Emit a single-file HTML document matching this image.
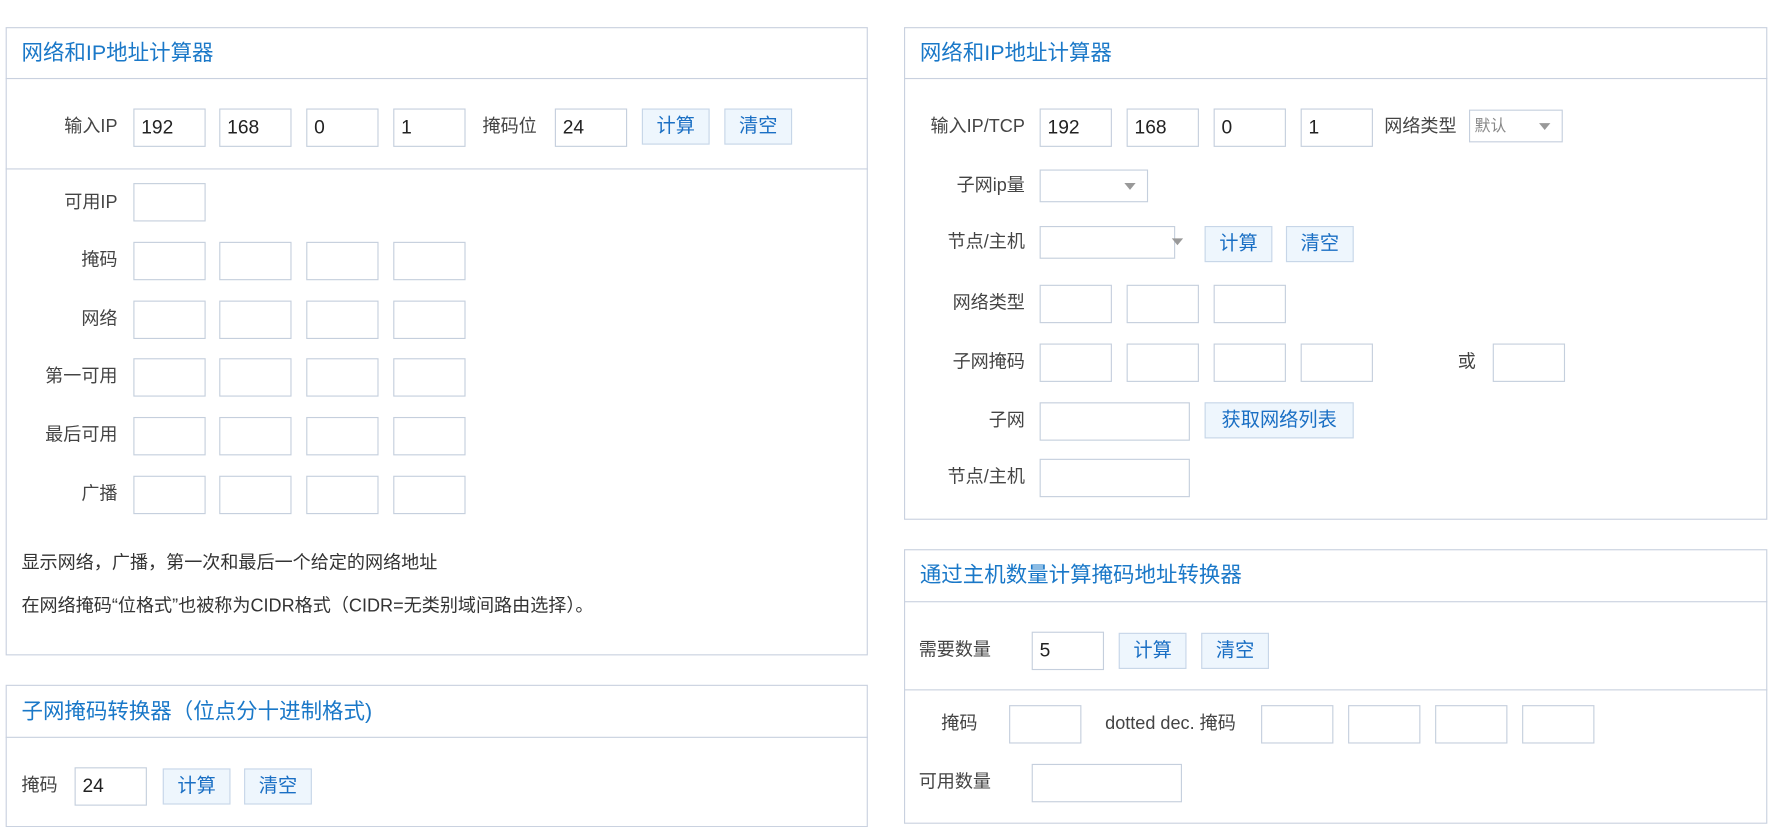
<!DOCTYPE html>
<html><head><meta charset="utf-8"><style>
html,body{margin:0;padding:0;background:#fff;width:1774px;height:827px;overflow:hidden}
#w{position:absolute;left:0;top:0;width:1570px;height:732px;transform:scale(1.13);transform-origin:0 0;font-family:"Liberation Sans","Noto Sans CJK SC",sans-serif;font-size:16px;color:#444}
.p{position:absolute;border:1px solid #c9d1df;box-sizing:border-box}
.hl{position:absolute;height:1px;background:#c9d1df}
.t{position:absolute;color:#1a78c8;font-size:19px;white-space:nowrap}
.i{position:absolute;border:1px solid #c5cfdd;box-sizing:border-box;height:34px;width:64px;font-size:17px;color:#222;padding-left:6px;line-height:32px;background:#fff}
.b{position:absolute;border:1px solid #c7d6e8;background:#eef6fd;color:#1a6fc4;box-sizing:border-box;height:32px;width:60px;text-align:center;line-height:30px;font-size:17px}
.l{position:absolute;white-space:nowrap;line-height:20px}
.r{text-align:right}
.s{position:absolute;border:1px solid #c5cfdd;box-sizing:border-box;height:29px;background:#fff;color:#888;font-size:14px;line-height:27px;padding-left:4px}
.s:after{content:"";position:absolute;right:10px;top:11px;border:5px solid transparent;border-top:6px solid #999;border-bottom:0}
.s.n:after{display:none}
</style></head><body><div id="w">
<div class="p" style="left:5px;top:24px;width:763px;height:556px"></div>
<div class="hl" style="left:5px;top:69px;width:763px"></div>
<div class="hl" style="left:5px;top:149px;width:763px"></div>
<div class="t" style="left:19px;top:32px">网络和IP地址计算器</div>
<div class="l r" style="right:1466px;top:103px">输入IP</div>
<div class="i" style="left:118px;top:96px">192</div><div class="i" style="left:194px;top:96px">168</div><div class="i" style="left:271px;top:96px">0</div><div class="i" style="left:348px;top:96px">1</div>
<div class="l" style="left:427px;top:103px">掩码位</div>
<div class="i" style="left:491px;top:96px">24</div>
<div class="b" style="left:568px;top:96px">计算</div><div class="b" style="left:641px;top:96px">清空</div>
<div class="l r" style="right:1466px;top:170px">可用IP</div><div class="i" style="left:118px;top:162px"></div>
<div class="l r" style="right:1466px;top:221px">掩码</div>
<div class="l r" style="right:1466px;top:273px">网络</div>
<div class="l r" style="right:1466px;top:324px">第一可用</div>
<div class="l r" style="right:1466px;top:376px">最后可用</div>
<div class="l r" style="right:1466px;top:428px">广播</div>
<div class="i" style="left:118px;top:214px"></div><div class="i" style="left:194px;top:214px"></div><div class="i" style="left:271px;top:214px"></div><div class="i" style="left:348px;top:214px"></div>
<div class="i" style="left:118px;top:266px"></div><div class="i" style="left:194px;top:266px"></div><div class="i" style="left:271px;top:266px"></div><div class="i" style="left:348px;top:266px"></div>
<div class="i" style="left:118px;top:317px"></div><div class="i" style="left:194px;top:317px"></div><div class="i" style="left:271px;top:317px"></div><div class="i" style="left:348px;top:317px"></div>
<div class="i" style="left:118px;top:369px"></div><div class="i" style="left:194px;top:369px"></div><div class="i" style="left:271px;top:369px"></div><div class="i" style="left:348px;top:369px"></div>
<div class="i" style="left:118px;top:421px"></div><div class="i" style="left:194px;top:421px"></div><div class="i" style="left:271px;top:421px"></div><div class="i" style="left:348px;top:421px"></div>
<div class="l" style="left:19px;top:489px;color:#333">显示网络，广播，第一次和最后一个给定的网络地址</div>
<div class="l" style="left:19px;top:527px;color:#333">在网络掩码“位格式”也被称为CIDR格式（CIDR=无类别域间路由选择）。</div>

<div class="p" style="left:5px;top:606px;width:763px;height:126px"></div>
<div class="hl" style="left:5px;top:652px;width:763px"></div>
<div class="t" style="left:19px;top:615px">子网掩码转换器（位点分十进制格式)</div>
<div class="l" style="left:19px;top:686px">掩码</div>
<div class="i" style="left:66px;top:679px">24</div>
<div class="b" style="left:144px;top:680px">计算</div><div class="b" style="left:216px;top:680px">清空</div>

<div class="p" style="left:800px;top:24px;width:764px;height:436px"></div>
<div class="hl" style="left:800px;top:69px;width:764px"></div>
<div class="t" style="left:814px;top:32px">网络和IP地址计算器</div>
<div class="l r" style="right:663px;top:103px">输入IP/TCP</div>
<div class="i" style="left:920px;top:96px">192</div><div class="i" style="left:997px;top:96px">168</div><div class="i" style="left:1074px;top:96px">0</div><div class="i" style="left:1151px;top:96px">1</div>
<div class="l" style="left:1225px;top:103px">网络类型</div>
<div class="s" style="left:1300px;top:97px;width:83px">默认</div>
<div class="l r" style="right:663px;top:155px">子网ip量</div>
<div class="s" style="left:920px;top:150px;width:96px"></div>
<div class="l r" style="right:663px;top:205px">节点/主机</div>
<div class="s n" style="left:920px;top:200px;width:120px"></div>
<div style="position:absolute;left:1037px;top:211px;border:5px solid transparent;border-top:6px solid #999;border-bottom:0"></div>
<div class="b" style="left:1066px;top:200px">计算</div><div class="b" style="left:1138px;top:200px">清空</div>
<div class="l r" style="right:663px;top:259px">网络类型</div>
<div class="i" style="left:920px;top:252px"></div><div class="i" style="left:997px;top:252px"></div><div class="i" style="left:1074px;top:252px"></div>
<div class="l r" style="right:663px;top:311px">子网掩码</div>
<div class="i" style="left:920px;top:304px"></div><div class="i" style="left:997px;top:304px"></div><div class="i" style="left:1074px;top:304px"></div><div class="i" style="left:1151px;top:304px"></div>
<div class="l" style="left:1290px;top:311px">或</div>
<div class="i" style="left:1321px;top:304px"></div>
<div class="l r" style="right:663px;top:363px">子网</div>
<div class="i" style="left:920px;top:356px;width:133px"></div>
<div class="b" style="left:1066px;top:356px;width:132px">获取网络列表</div>
<div class="l r" style="right:663px;top:413px">节点/主机</div>
<div class="i" style="left:920px;top:406px;width:133px"></div>

<div class="p" style="left:800px;top:486px;width:764px;height:243px"></div>
<div class="hl" style="left:800px;top:532px;width:764px"></div>
<div class="t" style="left:814px;top:494px">通过主机数量计算掩码地址转换器</div>
<div class="l" style="left:813px;top:566px">需要数量</div>
<div class="i" style="left:913px;top:559px">5</div>
<div class="b" style="left:990px;top:560px">计算</div><div class="b" style="left:1063px;top:560px">清空</div>
<div class="hl" style="left:800px;top:610px;width:764px"></div>
<div class="l" style="left:833px;top:631px">掩码</div>
<div class="i" style="left:893px;top:624px"></div>
<div class="l" style="left:978px;top:631px">dotted dec. 掩码</div>
<div class="i" style="left:1116px;top:624px"></div><div class="i" style="left:1193px;top:624px"></div><div class="i" style="left:1270px;top:624px"></div><div class="i" style="left:1347px;top:624px"></div>
<div class="l" style="left:813px;top:683px">可用数量</div>
<div class="i" style="left:913px;top:676px;width:133px"></div>
</div></body></html>
